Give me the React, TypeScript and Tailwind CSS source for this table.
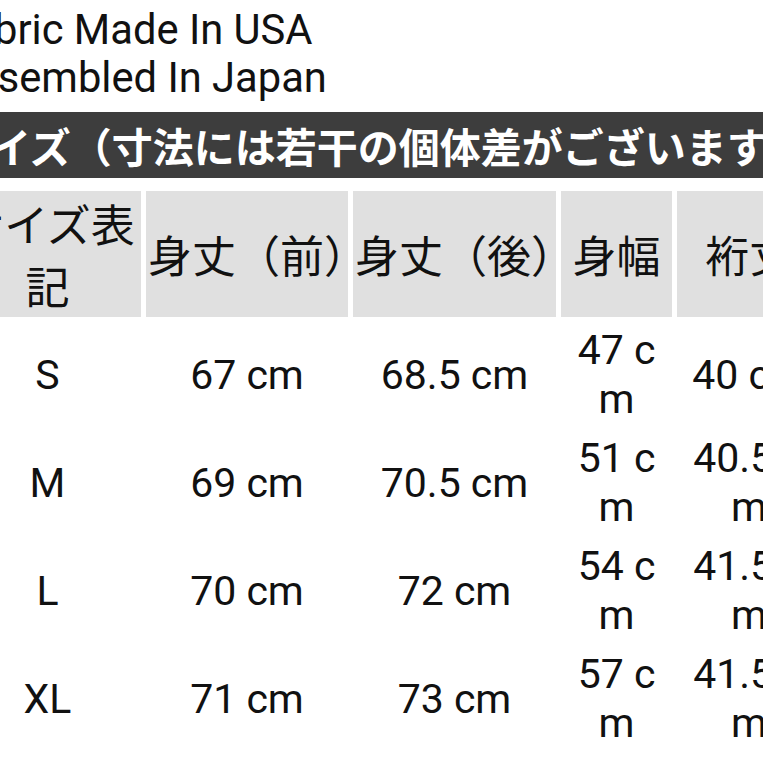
const rows = [
  ['S', '67 cm', '68.5 cm', '47 cm', '40 cm'],
  ['M', '69 cm', '70.5 cm', '51 cm', '40.5 cm'],
  ['L', '70 cm', '72 cm', '54 cm', '41.5 cm'],
  ['XL', '71 cm', '73 cm', '57 cm', '41.5 cm'],
]

const jp = "font-['Noto_Sans_CJK_JP',sans-serif]"

export default function App() {
  return (
    <div className="w-[763px] h-[763px] overflow-hidden bg-white text-[#111]">
      <div className="-ml-[51px] w-[877px] pt-[6px]">
        <div className="font-['Roboto','Liberation_Sans',sans-serif] text-[41.7px] leading-[48px]">
          <div className="whitespace-nowrap">Fabric Made In USA</div>
          <div className="whitespace-nowrap">Assembled In Japan</div>
        </div>

        <div
          className={`mt-[10px] h-[66px] bg-[#3d3d3d] text-white font-bold text-[41px] leading-[66px] whitespace-nowrap ${jp}`}
        >
          サイズ（寸法には若干の個体差がございます）
        </div>

        <table className="mt-[8px] w-[877px] table-fixed border-separate border-spacing-[5px]">
          <colgroup>
            <col className="w-[187px]" />
            <col className="w-[202px]" />
            <col className="w-[203px]" />
            <col className="w-[111px]" />
            <col className="w-[144px]" />
          </colgroup>
          <thead>
            <tr className={`h-[126px] text-[44px] leading-[62px] font-normal ${jp}`}>
              <th className="bg-[#e0e0e0] px-[2px] text-center font-normal">サイズ表記</th>
              <th className="bg-[#e0e0e0] pl-[2px] text-left font-normal whitespace-nowrap">身丈（前）</th>
              <th className="bg-[#e0e0e0] pl-[2px] text-left font-normal whitespace-nowrap">身丈（後）</th>
              <th className="bg-[#e0e0e0] px-[2px] text-center font-normal whitespace-nowrap">身幅</th>
              <th className="bg-[#e0e0e0] px-[2px] text-center font-normal whitespace-nowrap">裄丈</th>
            </tr>
          </thead>
          <tbody className="font-['Roboto','Liberation_Sans',sans-serif] text-[41px] leading-[49px]">
            {rows.map((r) => (
              <tr key={r[0]} className="h-[103px]">
                {r.map((c, i) => (
                  <td key={i} className="px-[2px] pt-[3px] text-center align-middle break-all">
                    {c}
                  </td>
                ))}
              </tr>
            ))}
          </tbody>
        </table>
      </div>
    </div>
  )
}
